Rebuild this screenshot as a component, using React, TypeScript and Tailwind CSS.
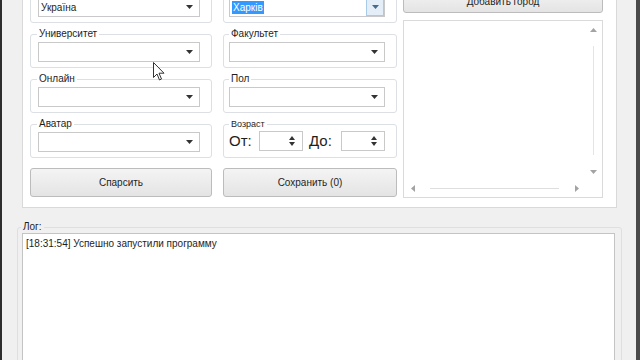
import React from 'react';

const Tri = ({ color = '#333' }: { color?: string }) => (
    <svg width="7" height="4" viewBox="0 0 7 4">
        <polygon points="0,0 7,0 3.5,4" fill={color} />
    </svg>
);

const Combo = ({ value, focused }: { value?: string; focused?: boolean }) => (
    <div className="flex h-[20px] items-stretch border border-[#c9c9c9] bg-white">
        <div className="flex flex-1 items-center pl-[2px] leading-[13px] whitespace-nowrap">
            {focused ? <span className="bg-[#3399ff] px-[1px] text-white">{value}</span> : value}
        </div>
        {focused ? (
            <div className="flex w-[18px] items-center justify-center border border-[#a8cbe9] bg-[#e3eef9]">
                <Tri color="#4a6a8a" />
            </div>
        ) : (
            <div className="flex w-[19px] items-center justify-center">
                <Tri />
            </div>
        )}
    </div>
);

const Spin = () => (
    <div className="flex h-[20px] w-[44px] items-center justify-end border border-[#c9c9c9] bg-white pr-[7px]">
        <div className="flex flex-col items-center gap-[2px]">
            <svg width="6" height="4" viewBox="0 0 6 4"><polygon points="0,4 6,4 3,0" fill="#333" /></svg>
            <svg width="6" height="4" viewBox="0 0 6 4"><polygon points="0,0 6,0 3,4" fill="#333" /></svg>
        </div>
    </div>
);

const Group = ({ title, small, left, shift, children }: { title: string; small?: boolean; left: string; shift: string; children: React.ReactNode }) => (
    <fieldset className={`h-[40px] rounded-[3px] border border-[#dcdfe3] ${left} pr-[11px]`}>
        <legend className={`${shift} px-[2px] leading-[12px] ${small ? 'text-[9px]' : ''}`}>{title}</legend>
        <div className="mt-[2px]">{children}</div>
    </fieldset>
);

const Btn = ({ children, h = 'h-[29px]' }: { children: React.ReactNode; h?: string }) => (
    <div className={`flex ${h} items-center justify-center rounded-[3px] border border-[#bcbcbc] bg-gradient-to-b from-[#f4f4f4] to-[#e4e4e4]`}>
        {children}
    </div>
);

const ListBox = () => (
    <div className="flex h-[178px] flex-col border border-[#dadada] bg-white">
        <div className="flex flex-1">
            <div className="flex-1" />
            <div className="flex w-[17px] flex-col items-center">
                <div className="flex h-[17px] items-center">
                    <svg width="7" height="4" viewBox="0 0 7 4"><polygon points="0,4 7,4 3.5,0" fill="#a3a3a3" /></svg>
                </div>
                <div className="my-[8px] w-px flex-1 bg-[#e4e4e4]" />
                <div className="flex h-[17px] items-center">
                    <Tri color="#a3a3a3" />
                </div>
            </div>
        </div>
        <div className="flex h-[17px] items-center">
            <div className="flex w-[17px] justify-center">
                <svg width="4" height="7" viewBox="0 0 4 7"><polygon points="4,0 4,7 0,3.5" fill="#a3a3a3" /></svg>
            </div>
            <div className="mx-[9px] h-px flex-1 bg-[#dedede]" />
            <div className="flex w-[17px] justify-center">
                <svg width="4" height="7" viewBox="0 0 4 7"><polygon points="0,0 0,7 4,3.5" fill="#a3a3a3" /></svg>
            </div>
            <div className="w-[17px]" />
        </div>
    </div>
);

export default function App() {
    return (
        <div className="relative flex h-[360px] w-[640px] overflow-hidden bg-[#f0f0f0] font-['Liberation_Sans',Arial,sans-serif] text-[10px] text-[#1e1e1e]">
            <div className="w-[2px] bg-[#2e2e2e]" />
            <div className="flex flex-1 flex-col">
                <div className="mr-[19px] ml-[20px] mt-[-20px] flex gap-[11px] border border-[#d9d9d9] bg-white pt-[2px] pb-[9px] pl-[7px]">
                    <div className="flex w-[182px] flex-col gap-[5px]">
                        <Group title="Страна" left="pl-[7px]" shift="ml-[-1px]"><Combo value="Україна" /></Group>
                        <Group title="Университет" left="pl-[7px]" shift="ml-[-1px]"><Combo /></Group>
                        <Group title="Онлайн" left="pl-[7px]" shift="ml-[-1px]"><Combo /></Group>
                        <Group title="Аватар" left="pl-[7px]" shift="ml-[-1px]"><Combo /></Group>
                        <div className="mt-[5px]"><Btn>Спарсить</Btn></div>
                    </div>
                    <div className="flex w-[174px] flex-col gap-[5px]">
                        <Group title="Город" left="pl-[5px]" shift="ml-0"><Combo value="Харків" focused /></Group>
                        <Group title="Факультет" left="pl-[5px]" shift="ml-0"><Combo /></Group>
                        <Group title="Пол" left="pl-[5px]" shift="ml-0"><Combo /></Group>
                        <Group title="Возраст" small left="pl-[5px]" shift="ml-0">
                            <div className="mt-[-1px] flex items-center">
                                <span className="w-[30px] text-[15px] leading-[20px]">От:</span>
                                <Spin />
                                <span className="ml-[6px] w-[32px] text-[15px] leading-[20px]">До:</span>
                                <Spin />
                            </div>
                        </Group>
                        <div className="mt-[5px]"><Btn>Сохранить (0)</Btn></div>
                    </div>
                    <div className="ml-[-5px] flex w-[200px] flex-col pt-[7px]">
                        <Btn h="h-[23px]">Добавить город</Btn>
                        <div className="mt-[7px]"><ListBox /></div>
                    </div>
                </div>
                <fieldset className="mt-[13px] mr-[14px] ml-[15px] flex-1 rounded-[3px] border border-[#dcdfe3] pl-[4px] pr-[6px]">
                    <legend className="ml-[-1px] px-[2px] leading-[12px]">Лог:</legend>
                    <div className="h-[200px] border border-[#c4c4c4] bg-white pt-[3px] pl-[3px] leading-[13px]">
                        [18:31:54] Успешно запустили программу
                    </div>
                </fieldset>
            </div>
            <div className="w-[4px] bg-[#4a4a4a]" />
            <svg className="absolute left-[153px] top-[62px]" width="12" height="19" viewBox="0 0 12 19">
                <path d="M0.5 0.5 L0.5 15.5 L4 12 L6.5 18 L8.5 17 L6 11.2 L11 11.2 Z" fill="#fff" stroke="#333" strokeWidth="1" />
            </svg>
        </div>
    );
}
